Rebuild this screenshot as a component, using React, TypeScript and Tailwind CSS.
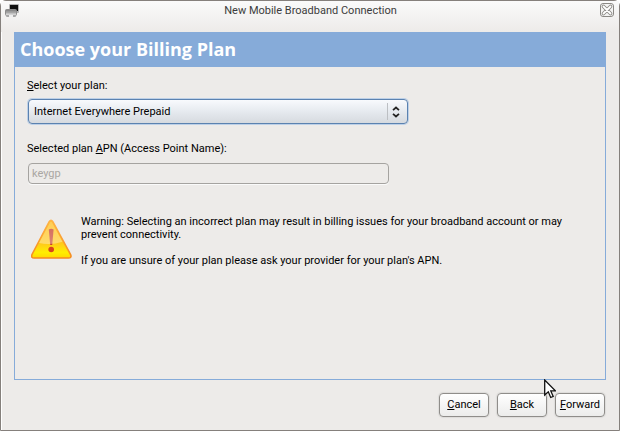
import type { ReactNode } from 'react';

const plans = ['Internet Everywhere Prepaid', 'My plan is not listed...'];

function PrinterIcon() {
  return (
    <svg width="16" height="16" viewBox="0 0 16 16" aria-hidden="true">
      <rect x="4" y="1" width="10" height="9" rx="1" fill="#b4b4b4" />
      <rect x="5" y="2" width="8" height="6" fill="#101010" />
      <rect x="0.5" y="6.5" width="11" height="6" rx="1" fill="url(#screen)" stroke="#8c8c8c" />
      <path d="M1 9.5h10" stroke="#a6a6a6" />
      <rect x="1" y="12" width="10" height="2" rx="1" fill="#a8a8a8" />
      <path d="M4 12h4v2H4z" fill="#eeeeee" />
      <defs>
        <linearGradient id="screen" x1="0" y1="0" x2="0" y2="1">
          <stop stopColor="#777777" />
          <stop offset="1" stopColor="#e6e6e6" />
        </linearGradient>
      </defs>
    </svg>
  );
}

function CloseIcon() {
  return (
    <svg width="15" height="15" viewBox="0 0 15 15" aria-hidden="true">
      <rect x="0.5" y="0.5" width="13" height="13" rx="2.5" fill="#f3f3f2" stroke="#8b8985" />
      <path d="M3.5 3.5l7 7M10.5 3.5l-7 7" stroke="#8b8985" strokeWidth="3.6" strokeLinecap="round" />
      <path d="M3.5 3.5l7 7M10.5 3.5l-7 7" stroke="#ffffff" strokeWidth="1.8" strokeLinecap="round" />
    </svg>
  );
}

function WarningIcon() {
  return (
    <svg className="shrink-0" width="42" height="42" viewBox="0 0 42 42" aria-hidden="true">
      <defs>
        <linearGradient id="warn" x1="0" y1="0" x2="0" y2="1">
          <stop stopColor="#ffc02e" />
          <stop offset="0.6" stopColor="#ffc71c" />
          <stop offset="0.85" stopColor="#ffee00" />
          <stop offset="1" stopColor="#ffd800" />
        </linearGradient>
        <linearGradient id="warnEdge" x1="0" y1="0" x2="0" y2="1">
          <stop stopColor="#ffb347" />
          <stop offset="1" stopColor="#f58a1f" />
        </linearGradient>
        <linearGradient id="shine" x1="0" y1="0" x2="0" y2="1">
          <stop stopColor="#ffffff" stopOpacity="0.2" />
          <stop offset="1" stopColor="#ffffff" stopOpacity="0.35" />
        </linearGradient>
      </defs>
      <path
        d="M18.2 2.6Q20 0 21.8 2.6L39.6 35.5Q41 39 37.4 39H3.2Q-0.4 39 1 35.5Z"
        fill="url(#warn)"
        stroke="url(#warnEdge)"
        strokeWidth="1.6"
      />
      <path d="M17.8 10.5q2.4-1.6 4.8 0l-1.4 15.5h-2z" fill="#c8402a" />
      <circle cx="20.2" cy="30.5" r="2.8" fill="#d9431c" />
      <path d="M19 3.4Q20 2 21 3.4L31.4 22.8Q20 26.5 8 24z" fill="url(#shine)" />
    </svg>
  );
}

function Pointer() {
  return (
    <svg
      className="pointer-events-none absolute -top-px right-[63px]"
      width="12"
      height="20"
      viewBox="0 0 12 20"
      aria-hidden="true"
    >
      <path
        d="M0.7 1v15l3.6-3.2 2.4 5.7 2.5-1.1-2.4-5.5h4.6z"
        fill="#ffffff"
        stroke="#111111"
        strokeWidth="1.3"
      />
    </svg>
  );
}

function DialogButton({ children }: { children: ReactNode }) {
  return (
    <button
      type="button"
      className="h-6 w-[50px] rounded border border-[#8f8d8a] bg-linear-to-b from-white to-[#ececeb] text-center leading-4 whitespace-nowrap shadow-[0_0_1px_1px_#dddcda]"
    >
      {children}
    </button>
  );
}

export default function App() {
  return (
    <div className="flex min-h-screen flex-col rounded-t-md border border-[#85807c] bg-[#edebe9] font-[Roboto,'Noto_Sans',sans-serif] text-[11px] leading-[13px] text-black shadow-[inset_1px_1px_0_#ffffff]">
      <header className="flex h-[31px] items-start justify-between bg-linear-to-b from-[#fafafa] to-[#edebe9] px-1 pt-0.5">
        <PrinterIcon />
        <h1 className="leading-4 text-[#3c3c3c]">New Mobile Broadband Connection</h1>
        <button type="button" aria-label="Close">
          <CloseIcon />
        </button>
      </header>

      <main className="mx-[13px] flex grow flex-col border border-[#86abd9]">
        <h2 className="bg-[#86abd9] px-[5px] pt-0.5 pb-1 font-['Open_Sans','Noto_Sans',sans-serif] text-lg leading-7 font-bold text-white">
          Choose your Billing Plan
        </h2>

        <div className="flex flex-col px-3 pt-[11px]">
          <label htmlFor="plan" className="leading-4">
            <u>S</u>elect your plan:
          </label>
          <div className="mt-[5px] w-full max-w-[381px] pl-px">
            <div className="relative">
              <select
                id="plan"
                className="block h-[25px] w-full appearance-none rounded border border-[#5b82b0] bg-linear-to-b from-[#f8fafd] via-[#e6eaef] to-[#d6dadf] pr-7 pl-[5px] shadow-[0_0_0_1px_#bdd0e7] outline-none"
              >
                {plans.map((plan) => (
                  <option key={plan}>{plan}</option>
                ))}
              </select>
              <span className="pointer-events-none absolute inset-y-1 right-2 flex items-center border-l border-[#bcbfc3] pl-1">
                <svg width="8" height="12" viewBox="0 0 8 12" fill="none" stroke="#222222" strokeWidth="1.7" aria-hidden="true">
                  <path d="M1 4.2L4 1.5l3 2.7M1 7.8l3 2.7 3-2.7" />
                </svg>
              </span>
            </div>
          </div>

          <label htmlFor="apn" className="mt-[17px] leading-4">
            Selected plan <u>A</u>PN (Access Point Name):
          </label>
          <div className="mt-1.5 w-full max-w-[362px] pl-px">
            <input
              id="apn"
              type="text"
              value="keygp"
              disabled
              className="block h-[21px] w-full rounded border border-[#a5a3a0] bg-[#edebe9] px-[3px] text-[#aaa7a3] shadow-[0_1px_0_#fafafa]"
            />
          </div>

          <div className="mt-[31px] flex gap-2 pl-1">
            <div className="pt-1">
              <WarningIcon />
            </div>
            <div className="max-w-[500px]">
              <p>
                Warning: Selecting an incorrect plan may result in billing issues for your broadband account or may
                prevent connectivity.
              </p>
              <p className="mt-[13px]">If you are unsure of your plan please ask your provider for your plan&apos;s APN.</p>
            </div>
          </div>
        </div>
      </main>

      <footer className="relative flex justify-end gap-2 px-[14px] pt-[13px] pb-[13px]">
        <DialogButton>
          <u>C</u>ancel
        </DialogButton>
        <DialogButton>
          <u>B</u>ack
        </DialogButton>
        <DialogButton>
          <u>F</u>orward
        </DialogButton>
        <Pointer />
      </footer>
    </div>
  );
}
